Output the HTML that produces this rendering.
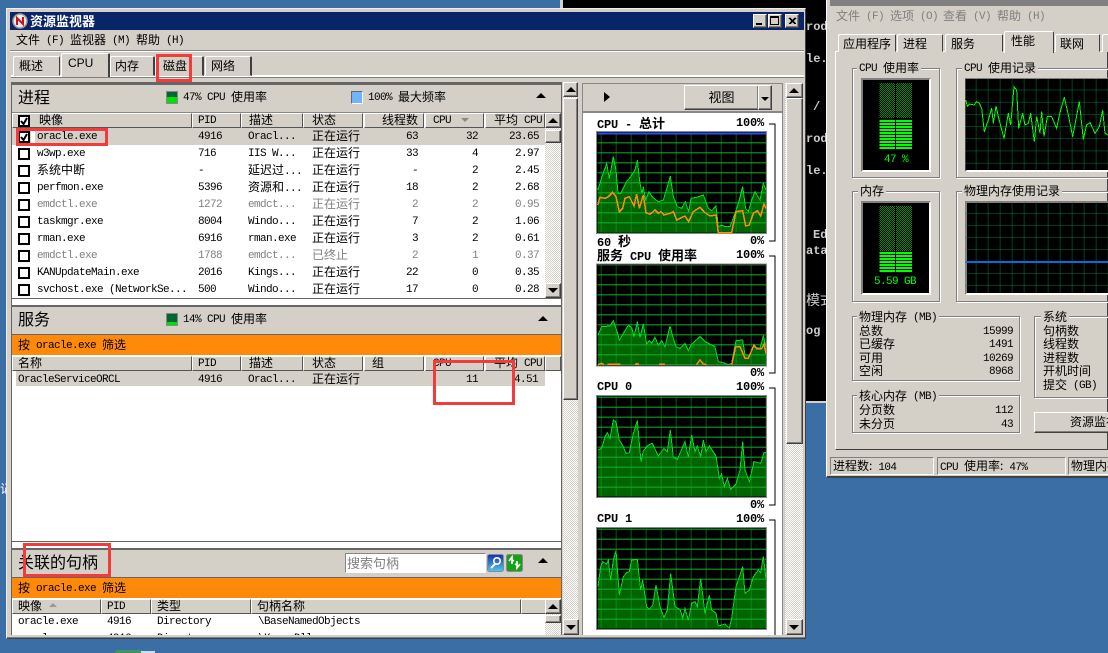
<!DOCTYPE html>
<html lang="zh"><head><meta charset="utf-8"><title>资源监视器</title>
<style>
*{box-sizing:border-box}
html,body{margin:0;padding:0}
body{width:1108px;height:653px;overflow:hidden;position:relative;background:#3a6ea5;font:11px/14px "Liberation Mono","WenQuanYi Zen Hei","Noto Sans CJK SC",monospace;letter-spacing:-.6px;color:#000}
div,span,svg{position:absolute}
svg{display:block;shape-rendering:crispEdges}
i{font-style:normal;font-size:12px;letter-spacing:0;position:relative;font-family:"WenQuanYi Zen Hei","Noto Sans CJK SC",sans-serif}
.t{white-space:nowrap;height:14px}
.u{margin-top:1px}
.x{margin-top:-1px}
.x i{top:1px}
.g{background:#d4d0c8}
.b{background:#d4d0c8;border:1px solid;border-color:#fff #404040 #404040 #fff;box-shadow:inset -1px -1px #808080}
.h{background:#d4d0c8;border:1px solid;border-color:#fff #555 #555 #fff;height:15px;top:0}
.d{background:repeating-conic-gradient(#d4d0c8 0 25%,#fff 0 50%) 0 0/2px 2px}
.or{background:#ff8a0a;left:12px;width:549px;height:21px;border-top:1px solid #666}
.sec{background:#d4d0c8;left:12px;width:549px;border-top:2px solid #666}
.lg{font-size:16px;letter-spacing:0;font-family:"WenQuanYi Zen Hei","Noto Sans CJK SC",sans-serif;line-height:20px;margin-top:-1px}
.r{left:12px;width:533px;height:17px;line-height:19px}
.r i{top:-2px}
.r span{white-space:nowrap;top:0}
.r span.m{top:-2px}
.r span.m i{top:0}
.n{left:25px}.p{left:186px}.q{left:236px}.s{left:300px}.th{right:127px}.c{right:67px}.av{right:6px}
.ck{left:6px;top:3px;width:12px;height:12px;border:2px solid #000;background:#fff}
.gy{color:#808080}
.up{width:0;height:0;border:5px solid transparent;border-top:0;border-bottom:5px solid #000}
.dn{width:0;height:0;border:5px solid transparent;border-bottom:0;border-top:5px solid #000}
.gb{border:1px solid #808080;box-shadow:1px 1px #fff,inset 1px 1px #fff}
.gt{background:#d4d0c8;padding:0 2px;white-space:nowrap;height:14px;line-height:14px}
.tb{background:#d4d0c8;border:1px solid;border-color:#fff #404040 transparent #fff;border-radius:2px 2px 0 0;text-align:left;line-height:18px;white-space:nowrap;letter-spacing:0}
.lb{font-weight:bold;font-size:12px;letter-spacing:-.2px;white-space:nowrap;height:14px;line-height:14px}
.lb i{font-size:13px;font-weight:bold}
.blk{background:#000;border:2px solid;border-color:#808080 #fff #fff #808080}
.st{border:1px solid;border-color:#808080 #fff #fff #808080;height:18px;top:457px;line-height:16px;padding-left:2px;white-space:nowrap;overflow:hidden}
.cs{color:#ccc;font-weight:bold;font-size:12px;letter-spacing:0;left:806px;width:20px;overflow:hidden;height:15px;line-height:15px;white-space:nowrap}
</style></head><body>

<!-- console -->
<div style="left:563px;top:0;width:264px;height:401px;background:#000"></div>
<div style="left:560px;top:0;width:3px;height:9px;background:#d4d0c8"></div>
<div style="left:806px;top:401px;width:20px;height:2px;background:#d4d0c8"></div>
<div class="cs" style="top:20px">rod</div>
<div class="cs" style="top:52px">le.</div>
<div class="cs" style="top:100px;left:813px">/</div>
<div class="cs" style="top:132px">rod</div>
<div class="cs" style="top:164px">le.</div>
<div class="cs" style="top:228px;left:813px;width:13px">Ed</div>
<div class="cs" style="top:244px">ata</div>
<div class="cs" style="top:291px;height:18px;line-height:18px;font-weight:normal"><i style="font-size:14px">模式</i></div>
<div class="cs" style="top:324px">og</div>
<div class="t" style="left:0;top:482px;width:6px;overflow:hidden;color:#fff"><i>记</i></div>
<div style="left:115px;top:650px;width:28px;height:3px;background:#3d9465;border-radius:8px 8px 0 0"></div>
<div style="left:141px;top:651px;width:14px;height:2px;background:#cde"></div>

<!-- task manager -->
<div class="g" style="left:826px;top:0;width:282px;height:478px;border-left:1px solid #fff;border-bottom:2px solid #404040"></div>
<div style="left:830px;top:0;width:278px;height:6px;background:#808080"></div>
<div class="t gy x" style="left:836px;top:9px;line-height:14px"><i>文件</i> (F)</div>
<div class="t gy x" style="left:890px;top:9px"><i>选项</i> (O)</div>
<div class="t gy x" style="left:943px;top:9px"><i>查看</i> (V)</div>
<div class="t gy x" style="left:997px;top:9px"><i>帮助</i> (H)</div>
<div class="g" style="left:835px;top:51px;width:273px;height:399px;border:1px solid;border-color:#fff #404040 #404040 #fff"></div>
<div class="tb" style="left:838px;top:34px;width:58px;height:18px;padding-left:4px"><i>应用程序</i></div>
<div class="tb" style="left:897px;top:34px;width:46px;height:18px;padding-left:5px"><i>进程</i></div>
<div class="tb" style="left:945px;top:34px;width:58px;height:18px;padding-left:5px"><i>服务</i></div>
<div class="tb" style="left:1004px;top:31px;width:50px;height:22px;border-bottom:0;z-index:2;padding-left:6px"><i>性能</i></div>
<div class="tb" style="left:1055px;top:34px;width:45px;height:18px;padding-left:4px"><i>联网</i></div>
<div class="tb" style="left:1102px;top:34px;width:10px;height:18px"></div>

<div class="gb" style="left:852px;top:68px;width:88px;height:110px"></div>
<div class="gt t x" style="left:857px;top:61px">CPU <i>使用率</i></div>
<div class="gb" style="left:956px;top:68px;width:160px;height:110px"></div>
<div class="gt t x" style="left:962px;top:61px">CPU <i>使用记录</i></div>
<div class="blk" style="left:861px;top:78px;width:70px;height:94px"></div>
<div class="blk" style="left:965px;top:78px;width:150px;height:94px"></div>

<div class="gb" style="left:852px;top:191px;width:88px;height:111px"></div>
<div class="gt t" style="left:858px;top:184px"><i>内存</i></div>
<div class="gb" style="left:956px;top:191px;width:160px;height:111px"></div>
<div class="gt t" style="left:962px;top:184px"><i>物理内存使用记录</i></div>
<div class="blk" style="left:861px;top:201px;width:70px;height:94px"></div>
<div class="blk" style="left:965px;top:201px;width:150px;height:94px"></div>

<!-- meter graphics + TM graphs -->
<svg style="left:820px;top:0" width="288" height="300" viewBox="0 0 864 900">
<defs>
<pattern id="dim" width="6" height="6" patternUnits="userSpaceOnUse"><rect width="6" height="6" fill="#000"/><rect width="3" height="3" fill="#0a8a0a"/><rect x="3" y="3" width="3" height="3" fill="#0a8a0a"/></pattern>
<pattern id="lit" width="9" height="9" patternUnits="userSpaceOnUse"><rect width="9" height="6" fill="#00ff00"/></pattern>
<pattern id="tg1" x="433" y="234" width="36" height="36.6" patternUnits="userSpaceOnUse"><path d="M35.5 0V36.6M0 36H36" stroke="#008040" stroke-width="3" fill="none"/></pattern>
<pattern id="tg2" x="433" y="66" width="36" height="36" patternUnits="userSpaceOnUse" ><path d="M35.5 0V36M0 35.5H36" stroke="#008040" stroke-width="3" fill="none"/></pattern>
</defs>
<rect x="178" y="249" width="47" height="105" fill="url(#dim)"/><rect x="228" y="249" width="48" height="105" fill="url(#dim)"/>
<rect x="178" y="357" width="47" height="93" fill="url(#lit)"/><rect x="228" y="357" width="48" height="93" fill="url(#lit)"/>
<rect x="436" y="237" width="428" height="273" fill="#000"/>
<rect x="436" y="237" width="428" height="273" fill="url(#tg1)"/>
<polyline fill="none" stroke="#00ff00" stroke-width="3" points="437,300 442,318 448,312 462,315 470,305 478,310 485,325 493,395 505,360 515,325 520,370 528,318 535,350 552,415 565,340 572,375 582,260 590,270 596,385 608,340 615,375 625,370 632,340 643,425 650,350 660,400 665,335 672,410 682,350 695,350 710,385 718,345 733,292 745,345 758,410 778,305 790,418 800,375 810,368 825,400 838,380 848,330 855,400 864,405"/>
</svg>
<div class="t" style="left:884px;top:153px;color:#00ff00">47 %</div>
<svg style="left:820px;top:180px" width="288" height="120" viewBox="0 0 864 360">
<rect x="178" y="78" width="47" height="135" fill="url(#dim)"/><rect x="228" y="78" width="48" height="135" fill="url(#dim)"/>
<rect x="178" y="216" width="47" height="60" fill="url(#lit)"/><rect x="228" y="216" width="48" height="60" fill="url(#lit)"/>
<rect x="436" y="66" width="428" height="273" fill="url(#tg2)"/>
<rect x="437" y="243" width="427" height="6" fill="#0070e0"/>
</svg>
<div class="t" style="left:874px;top:275px;color:#00ff00">5.59 GB</div>

<div class="gb" style="left:852px;top:316px;width:168px;height:65px"></div>
<div class="gt t x" style="left:857px;top:310px"><i>物理内存</i> (MB)</div>
<div class="t" style="left:859px;top:324px"><i>总数</i></div><div class="t u" style="right:95px;top:324px">15999</div>
<div class="t" style="left:859px;top:337px"><i>已缓存</i></div><div class="t u" style="right:95px;top:337px">1491</div>
<div class="t" style="left:859px;top:351px"><i>可用</i></div><div class="t u" style="right:95px;top:351px">10269</div>
<div class="t" style="left:859px;top:364px"><i>空闲</i></div><div class="t u" style="right:95px;top:364px">8968</div>
<div class="gb" style="left:852px;top:395px;width:168px;height:38px"></div>
<div class="gt t x" style="left:857px;top:389px"><i>核心内存</i> (MB)</div>
<div class="t" style="left:859px;top:403px"><i>分页数</i></div><div class="t u" style="right:95px;top:403px">112</div>
<div class="t" style="left:859px;top:417px"><i>未分页</i></div><div class="t u" style="right:95px;top:417px">43</div>
<div class="gb" style="left:1034px;top:316px;width:90px;height:82px"></div>
<div class="gt t" style="left:1041px;top:310px"><i>系统</i></div>
<div class="t" style="left:1043px;top:324px"><i>句柄数</i></div>
<div class="t" style="left:1043px;top:337px"><i>线程数</i></div>
<div class="t" style="left:1043px;top:351px"><i>进程数</i></div>
<div class="t" style="left:1043px;top:364px"><i>开机时间</i></div>
<div class="t x" style="left:1043px;top:378px"><i>提交</i> (GB)</div>
<div class="b" style="left:1034px;top:412px;width:90px;height:21px;padding:2px 0 0 35px;white-space:nowrap"><i>资源监视器</i></div>
<div class="st" style="left:830px;width:104px"><i>进程数:</i> 104</div>
<div class="st" style="left:937px;width:129px">CPU <i>使用率:</i> 47%</div>
<div class="st" style="left:1068px;width:60px"><i>物理内存:</i></div>

<!-- main window -->
<div class="g" style="left:6px;top:8px;width:800px;height:631px;border:1px solid;border-color:#eee #404040 #404040 #eee;box-shadow:inset 0 -1px #808080"></div>
<div style="left:10px;top:12px;width:794px;height:18px;background:#0a246a"></div>
<svg style="left:12px;top:13px;shape-rendering:auto" width="17" height="17" viewBox="0 0 17 17"><circle cx="8" cy="8" r="7" fill="#eee" stroke="#999" stroke-width="1.5"/><path d="M5 12V5L11 11V4" fill="none" stroke="#c11" stroke-width="2"/></svg>
<div class="t" style="left:30px;top:14px;color:#fff;font-weight:bold"><i style="font-size:13px;font-weight:bold">资源监视器</i></div>
<div class="b" style="left:753px;top:14px;width:14px;height:14px"></div><div style="left:756px;top:23px;width:6px;height:2px;background:#000"></div>
<div class="b" style="left:768px;top:14px;width:14px;height:14px"></div><div style="left:770px;top:16px;width:9px;height:9px;border:1px solid #000;border-top-width:2px"></div>
<div class="b" style="left:785px;top:14px;width:14px;height:14px"></div>
<svg style="left:785px;top:14px" width="14" height="14"><path d="M4 4L10 10M5 4L11 10M10 4L4 10M11 4L5 10" stroke="#000"/></svg>
<div class="t x" style="left:16px;top:33px"><i>文件</i> (F)</div>
<div class="t x" style="left:70px;top:33px"><i>监视器</i> (M)</div>
<div class="t x" style="left:136px;top:33px"><i>帮助</i> (H)</div>
<div style="left:10px;top:50px;width:794px;height:2px;background:#888;border-bottom:1px solid #fff"></div>
<div style="left:11px;top:75px;width:793px;height:2px;background:#fff"></div>
<div style="left:11px;top:77px;width:793px;height:1px;background:#808080"></div>
<div class="tb" style="left:13px;top:56px;width:47px;height:20px;padding-left:5px"><i>概述</i></div>
<div class="tb" style="left:61px;top:53px;width:49px;height:24px;border-right:2px solid #404040;border-bottom:0;z-index:2;padding-left:6px;font-family:'Liberation Sans',sans-serif;font-size:12px;line-height:19px">CPU</div>
<div class="tb" style="left:110px;top:56px;width:45px;height:20px;border-right:2px solid #404040;padding-left:4px"><i>内存</i></div>
<div class="tb" style="left:155px;top:56px;width:49px;height:20px;border-right:2px solid #404040;padding-left:7px"><i>磁盘</i></div>
<div class="tb" style="left:205px;top:56px;width:47px;height:20px;border-right:2px solid #404040;padding-left:5px"><i>网络</i></div>

<!-- left column -->
<div style="left:11px;top:82px;width:551px;height:553px;background:#fff;border:1px solid #666;border-width:1px 1px 0 1px"></div>

<!-- 进程 -->
<div class="sec" style="top:83px;height:30px;border-bottom:1px solid #888"></div>
<div class="t lg" style="left:18px;top:87px">进程</div>
<div style="left:166px;top:91px;width:12px;height:13px;border:1px solid #888;background:#063"><div style="left:0;top:5px;width:10px;height:6px;background:#00e000"></div></div>
<div class="t x" style="left:183px;top:90px">47% CPU <i>使用率</i></div>
<div style="left:351px;top:91px;width:12px;height:13px;background:#6fb4ff;border:1px solid;border-color:#667 #fff #fff #667"></div>
<div class="t x" style="left:368px;top:90px">100% <i>最大频率</i></div>
<div class="up" style="left:536px;top:93px"></div>

<div style="left:12px;top:113px;width:549px;height:15px">
 <div class="h" style="left:0;width:180px"></div>
 <div class="ck" style="left:6px;top:2px;background:#fff"></div>
 <div class="h" style="left:180px;width:49px"></div>
 <div class="h" style="left:229px;width:62px"></div>
 <div class="h" style="left:291px;width:60px"></div>
 <div class="h" style="left:352px;width:60px"></div>
 <div class="h" style="left:413px;width:59px"></div>
 <div class="h" style="left:473px;width:60px"></div>
</div>
<svg style="left:18px;top:115px;shape-rendering:auto" width="12" height="12"><path d="M3 6L5.5 9L9 3" fill="none" stroke="#000" stroke-width="2"/></svg>
<div class="t" style="left:39px;top:113px"><i>映像</i></div>
<div class="t u" style="left:198px;top:113px">PID</div>
<div class="t" style="left:249px;top:113px"><i>描述</i></div>
<div class="t" style="left:312px;top:113px"><i>状态</i></div>
<div class="t" style="right:690px;top:113px"><i>线程数</i></div>
<div class="t u" style="left:433px;top:113px">CPU</div>
<div style="left:461px;top:118px;width:0;height:0;border:4px solid transparent;border-bottom:0;border-top:4px solid #888"></div>
<div class="t x" style="left:494px;top:113px"><i>平均</i> CPU</div>

<div class="g" style="left:12px;top:128px;width:533px;height:17px"></div>
<div style="left:31px;top:128px;width:4px;height:17px;background:#fff"></div>
<div class="r" style="top:128px"><div class="ck"></div><span class="n">oracle.exe</span><span class="p">4916</span><span class="q">Oracl...</span><span class="s"><i>正在运行</i></span><span class="th">63</span><span class="c">32</span><span class="av">23.65</span></div>
<svg style="left:18px;top:131px;shape-rendering:auto" width="12" height="12"><path d="M3 6L5.5 9L9 3" fill="none" stroke="#000" stroke-width="2"/></svg>
<div class="r" style="top:145px"><div class="ck"></div><span class="n">w3wp.exe</span><span class="p">716</span><span class="q">IIS W...</span><span class="s"><i>正在运行</i></span><span class="th">33</span><span class="c">4</span><span class="av">2.97</span></div>
<div class="r" style="top:162px"><div class="ck"></div><span class="n"><i>系统中断</i></span><span class="p">-</span><span class="q m"><i>延迟过</i>...</span><span class="s"><i>正在运行</i></span><span class="th">-</span><span class="c">2</span><span class="av">2.45</span></div>
<div class="r" style="top:179px"><div class="ck"></div><span class="n">perfmon.exe</span><span class="p">5396</span><span class="q m"><i>资源和</i>...</span><span class="s"><i>正在运行</i></span><span class="th">18</span><span class="c">2</span><span class="av">2.68</span></div>
<div class="r gy" style="top:196px"><div class="ck"></div><span class="n">emdctl.exe</span><span class="p">1272</span><span class="q">emdct...</span><span class="s"><i>正在运行</i></span><span class="th">2</span><span class="c">2</span><span class="av">0.95</span></div>
<div class="r" style="top:213px"><div class="ck"></div><span class="n">taskmgr.exe</span><span class="p">8004</span><span class="q">Windo...</span><span class="s"><i>正在运行</i></span><span class="th">7</span><span class="c">2</span><span class="av">1.06</span></div>
<div class="r" style="top:230px"><div class="ck"></div><span class="n">rman.exe</span><span class="p">6916</span><span class="q">rman.exe</span><span class="s"><i>正在运行</i></span><span class="th">3</span><span class="c">2</span><span class="av">0.61</span></div>
<div class="r gy" style="top:247px"><div class="ck"></div><span class="n">emdctl.exe</span><span class="p">1788</span><span class="q">emdct...</span><span class="s"><i>已终止</i></span><span class="th">2</span><span class="c">1</span><span class="av">0.37</span></div>
<div class="r" style="top:264px"><div class="ck"></div><span class="n">KANUpdateMain.exe</span><span class="p">2016</span><span class="q">Kings...</span><span class="s"><i>正在运行</i></span><span class="th">22</span><span class="c">0</span><span class="av">0.35</span></div>
<div class="r" style="top:281px"><div class="ck"></div><span class="n">svchost.exe (NetworkSe...</span><span class="p">500</span><span class="q">Windo...</span><span class="s"><i>正在运行</i></span><span class="th">17</span><span class="c">0</span><span class="av">0.28</span></div>

<div class="d" style="left:545px;top:128px;width:16px;height:170px"></div>
<div class="b" style="left:545px;top:113px;width:16px;height:15px"></div><div class="up" style="left:548px;top:118px"></div>
<div class="b" style="left:545px;top:130px;width:16px;height:13px"></div>
<div class="b" style="left:545px;top:283px;width:16px;height:15px"></div><div class="dn" style="left:548px;top:288px"></div>
<div style="left:11px;top:298px;width:551px;height:1px;background:#666"></div>

<!-- 服务 -->
<div class="sec" style="top:305px;height:30px"></div>
<div class="t lg" style="left:18px;top:309px">服务</div>
<div style="left:166px;top:313px;width:12px;height:13px;border:1px solid #888;background:#063"><div style="left:0;top:8px;width:10px;height:3px;background:#00e000"></div></div>
<div class="t x" style="left:183px;top:312px">14% CPU <i>使用率</i></div>
<div class="up" style="left:538px;top:316px"></div>
<div class="or" style="top:334px"></div>
<div class="t x" style="left:18px;top:338px"><i>按</i> oracle.exe <i>筛选</i></div>
<div style="left:12px;top:356px;width:549px;height:15px">
 <div class="h" style="left:0;width:180px"></div>
 <div class="h" style="left:180px;width:49px"></div>
 <div class="h" style="left:229px;width:62px"></div>
 <div class="h" style="left:291px;width:60px"></div>
 <div class="h" style="left:352px;width:60px"></div>
 <div class="h" style="left:413px;width:59px"></div>
 <div class="h" style="left:473px;width:60px"></div>
 <div class="h" style="left:533px;width:16px"></div>
</div>
<div class="t" style="left:18px;top:356px"><i>名称</i></div>
<div class="t u" style="left:198px;top:356px">PID</div>
<div class="t" style="left:249px;top:356px"><i>描述</i></div>
<div class="t" style="left:312px;top:356px"><i>状态</i></div>
<div class="t" style="left:372px;top:356px"><i>组</i></div>
<div class="t u" style="left:433px;top:356px">CPU</div>
<div class="t x" style="left:494px;top:356px"><i>平均</i> CPU</div>
<div class="g" style="left:16px;top:371px;width:529px;height:15px"></div>
<div class="t u" style="left:18px;top:372px">OracleServiceORCL</div>
<div class="t u" style="left:198px;top:372px">4916</div>
<div class="t u" style="left:248px;top:372px">Oracl...</div>
<div class="t" style="left:312px;top:372px"><i>正在运行</i></div>
<div class="t u" style="left:466px;top:372px">11</div>
<div class="t u" style="left:514px;top:372px">4.51</div>
<div style="left:11px;top:541px;width:551px;height:1px;background:#666"></div>

<!-- 句柄 -->
<div class="sec" style="top:548px;height:29px"></div>
<div class="t lg" style="left:18px;top:552px">关联的句柄</div>
<div style="left:345px;top:553px;width:141px;height:20px;background:#fff;border:1px solid;border-color:#888 #fff #fff #888;color:#808080;font:13px/18px 'WenQuanYi Zen Hei','Noto Sans CJK SC',sans-serif;letter-spacing:0;padding-left:1px">搜索句柄</div>
<svg style="left:487px;top:554px;shape-rendering:auto" width="17" height="18"><defs><linearGradient id="bl" x1="0" y1="0" x2="0" y2="1"><stop offset="0" stop-color="#1530b0"/><stop offset="1" stop-color="#50c8f0"/></linearGradient></defs><rect x=".5" y=".5" width="16" height="17" rx="2" fill="url(#bl)" stroke="#889"/><circle cx="10" cy="7" r="3.2" fill="none" stroke="#fff" stroke-width="1.6"/><path d="M8 10L4 14" stroke="#fff" stroke-width="2"/></svg>
<svg style="left:506px;top:554px;shape-rendering:auto" width="17" height="18"><rect x=".5" y=".5" width="16" height="17" rx="2" fill="#18a018" stroke="#889"/><path d="M3 7L6 3L6 6L8 7M14 10L11 14L11 11L9 10M6 6V10M11 7V11" fill="none" stroke="#fff" stroke-width="1.6"/></svg>
<div class="up" style="left:538px;top:558px"></div>
<div class="or" style="top:577px"></div>
<div class="t x" style="left:18px;top:581px"><i>按</i> oracle.exe <i>筛选</i></div>
<div style="left:12px;top:599px;width:549px;height:15px">
 <div class="h" style="left:0;width:89px"></div>
 <div class="h" style="left:89px;width:50px"></div>
 <div class="h" style="left:139px;width:100px"></div>
 <div class="h" style="left:239px;width:270px"></div>
 <div class="h" style="left:509px;width:40px"></div>
</div>
<div class="t" style="left:18px;top:599px"><i>映像</i></div>
<div style="left:49px;top:603px;width:0;height:0;border:4px solid transparent;border-top:0;border-bottom:4px solid #999"></div>
<div class="t u" style="left:107px;top:599px">PID</div>
<div class="t" style="left:157px;top:599px"><i>类型</i></div>
<div class="t" style="left:257px;top:599px"><i>句柄名称</i></div>
<div class="t u" style="left:18px;top:614px">oracle.exe</div>
<div class="t u" style="left:107px;top:614px">4916</div>
<div class="t u" style="left:157px;top:614px">Directory</div>
<div class="t u" style="left:258px;top:614px">\BaseNamedObjects</div>
<div style="left:12px;top:632px;width:533px;height:3px;overflow:hidden">
 <div class="t" style="left:6px;top:0">oracle.exe</div>
 <div class="t" style="left:95px;top:0">4916</div>
 <div class="t" style="left:145px;top:0">Directory</div>
 <div class="t" style="left:246px;top:0">\KnownDlls</div>
</div>
<div class="d" style="left:545px;top:614px;width:16px;height:21px"></div>
<div class="b" style="left:545px;top:599px;width:16px;height:15px"></div><div class="up" style="left:548px;top:604px"></div>
<div class="b" style="left:545px;top:615px;width:16px;height:8px"></div>

<!-- outer left scrollbar -->
<div class="d" style="left:563px;top:82px;width:15px;height:553px"></div>
<div class="b" style="left:563px;top:82px;width:15px;height:15px"></div><div class="up" style="left:566px;top:87px"></div>
<div class="b" style="left:563px;top:98px;width:15px;height:302px"></div>
<div class="b" style="left:563px;top:619px;width:16px;height:16px"></div><div class="dn" style="left:566px;top:625px"></div>

<!-- right panel -->
<div style="left:582px;top:83px;width:201px;height:552px;background:#fff;border:1px solid #888;border-bottom:0"></div>
<div class="g" style="left:583px;top:84px;width:199px;height:29px;border-bottom:2px solid #888"></div>
<div style="left:604px;top:92px;width:0;height:0;border:5px solid transparent;border-left:6px solid #000;border-right:0"></div>
<div class="b" style="left:684px;top:85px;width:75px;height:25px;text-align:center;line-height:22px"><i style="font-size:13px">视图</i></div>
<div class="b" style="left:758px;top:85px;width:14px;height:25px"></div>
<div style="left:761px;top:97px;width:0;height:0;border:4px solid transparent;border-bottom:0;border-top:4px solid #000"></div>

<div class="lb t" style="left:597px;top:116px">CPU - <i>总计</i></div>
<div class="lb t" style="right:344px;top:116px">100%</div>
<div class="lb t" style="left:597px;top:234px">60 <i>秒</i></div>
<div class="lb t" style="right:344px;top:234px">0%</div>
<div class="lb t" style="left:597px;top:248px"><i>服务</i> CPU <i>使用率</i></div>
<div class="lb t" style="right:344px;top:248px">100%</div>
<div class="lb t" style="right:344px;top:366px">0%</div>
<div class="lb t" style="left:597px;top:380px">CPU 0</div>
<div class="lb t" style="right:344px;top:380px">100%</div>
<div class="lb t" style="right:344px;top:498px">0%</div>
<div class="lb t" style="left:597px;top:512px">CPU 1</div>
<div class="lb t" style="right:344px;top:512px">100%</div>

<svg style="left:590px;top:120px" width="190" height="520"><path d="M179 4H185V121H179M179 136H185V253H179M179 268H185V385H179M179 400H185V515" fill="none" stroke="#000"/></svg>

<!-- Chart 1 -->
<svg style="left:580px;top:80px" width="240" height="180" viewBox="0 0 720 540">
<defs><pattern id="c1" x="19" y="160" width="45" height="30" patternUnits="userSpaceOnUse"><path d="M44.5 0V30M0 29H45" stroke="#0db32a" stroke-width="3" fill="none"/></pattern></defs>
<rect x="50" y="155" width="510" height="306" fill="#000" stroke="#888" stroke-width="3"/>
<polygon fill="#006400" points="53,458 53,330 60,310 66,290 80,250 88,295 100,230 108,270 114,340 122,340 132,320 140,305 152,290 165,270 172,240 180,310 186,340 190,320 197,360 207,335 216,350 235,365 250,360 265,310 271,288 280,350 292,380 305,385 316,365 326,395 333,355 350,352 370,345 385,385 395,392 408,378 415,440 425,435 435,440 450,440 465,400 478,360 488,320 497,385 505,395 515,360 525,335 540,360 550,310 558,330 558,458"/>
<rect x="53" y="160" width="505" height="298" fill="url(#c1)"/>
<rect x="53" y="158" width="505" height="6" fill="#2850f0"/>
<polyline fill="none" stroke="#00e020" stroke-width="3" points="53,330 60,310 66,290 80,250 88,295 100,230 108,270 114,340 122,340 132,320 140,305 152,290 165,270 172,240 180,310 186,340 190,320 197,360 207,335 216,350 235,365 250,360 265,310 271,288 280,350 292,380 305,385 316,365 326,395 333,355 350,352 370,345 385,385 395,392 408,378 415,440 425,435 435,440 450,440 465,400 478,360 488,320 497,385 505,395 515,360 525,335 540,360 550,310 558,330"/>
<polyline fill="none" stroke="#ff8c10" stroke-width="4.5" points="53,375 60,352 75,355 85,350 98,337 108,350 118,395 128,385 135,355 148,350 162,378 170,342 178,385 190,345 198,398 210,403 225,390 235,400 243,395 252,405 270,400 280,395 290,420 315,408 326,425 340,395 360,382 375,398 390,408 408,405 415,458 455,458 468,395 488,392 497,438 508,435 520,400 532,392 542,408 552,372 558,385"/>
</svg>

<!-- Chart 2 -->
<svg style="left:590px;top:250px" width="220" height="140" viewBox="0 0 660 420">
<defs><pattern id="c2" x="-11" y="46" width="45" height="30" patternUnits="userSpaceOnUse"><path d="M44.5 0V30M0 29H45" stroke="#0db32a" stroke-width="3" fill="none"/></pattern></defs>
<rect x="20" y="42" width="510" height="306" fill="#000" stroke="#888" stroke-width="3"/>
<polygon fill="#006400" points="24,345 24,255 35,230 60,228 70,212 80,240 88,270 100,250 115,226 125,232 132,260 142,215 150,262 160,222 170,282 178,272 185,280 195,262 205,285 215,272 225,290 240,228 250,265 258,290 270,295 285,280 295,302 305,282 330,260 345,275 375,290 385,335 400,338 415,344 425,340 438,272 458,270 465,315 478,315 490,290 510,295 520,258 528,290 528,345"/>
<rect x="23" y="45" width="505" height="300" fill="url(#c2)"/>
<polyline fill="none" stroke="#00e020" stroke-width="3" points="24,255 35,230 60,228 70,212 80,240 88,270 100,250 115,226 125,232 132,260 142,215 150,262 160,222 170,282 178,272 185,280 195,262 205,285 215,272 225,290 240,228 250,265 258,290 270,295 285,280 295,302 305,282 330,260 345,275 375,290 385,335 400,338 415,344 425,340 438,272 458,270 465,315 478,315 490,290 510,295 520,258 528,290"/>
<path fill="none" stroke="#ff8c10" stroke-width="4.5" d="M24 344L35 340L42 344M52 343H92M135 344L141 341L147 344M207 343H225M320 344L330 330L340 342L350 344M425 344L437 290H450L465 325H475L492 285L500 296H515L522 282L528 310"/>
</svg>

<!-- Chart 3 + 4 -->
<svg style="left:590px;top:380px" width="220" height="255" viewBox="0 0 660 765">
<defs>
<pattern id="c3" x="-11" y="53" width="45" height="30" patternUnits="userSpaceOnUse"><path d="M44.5 0V30M0 29H45" stroke="#0db32a" stroke-width="3" fill="none"/></pattern>
<pattern id="c4" x="-11" y="449" width="45" height="30" patternUnits="userSpaceOnUse"><path d="M44.5 0V30M0 29H45" stroke="#0db32a" stroke-width="3" fill="none"/></pattern>
</defs>
<rect x="20" y="46" width="510" height="306" fill="#000" stroke="#888" stroke-width="3"/>
<polygon fill="#006400" points="24,350 24,210 35,205 45,170 52,158 60,175 70,120 78,125 88,180 100,200 108,220 118,218 130,160 142,122 148,190 153,245 160,212 175,195 187,190 205,228 222,205 232,215 241,150 250,232 262,238 285,185 295,230 305,165 315,215 322,198 332,230 340,180 348,215 358,198 378,228 388,295 395,282 403,320 412,295 422,328 438,312 450,270 458,185 465,270 478,305 492,245 512,250 522,218 528,218 528,350"/>
<rect x="23" y="49" width="505" height="301" fill="url(#c3)"/>
<polyline fill="none" stroke="#00e020" stroke-width="3" points="24,210 35,205 45,170 52,158 60,175 70,120 78,125 88,180 100,200 108,220 118,218 130,160 142,122 148,190 153,245 160,212 175,195 187,190 205,228 222,205 232,215 241,150 250,232 262,238 285,185 295,230 305,165 315,215 322,198 332,230 340,180 348,215 358,198 378,228 388,295 395,282 403,320 412,295 422,328 438,312 450,270 458,185 465,270 478,305 492,245 512,250 522,218 528,218"/>
<rect x="20" y="442" width="510" height="306" fill="#000" stroke="#888" stroke-width="3"/>
<polygon fill="#006400" points="24,746 24,620 32,560 38,545 50,552 55,540 62,600 70,540 78,512 88,645 100,590 110,578 118,575 125,540 142,538 152,630 158,600 170,680 178,688 188,675 198,615 210,680 222,712 232,690 242,580 255,680 270,688 278,715 285,685 295,720 305,670 315,665 322,680 332,595 345,700 358,645 365,690 378,700 385,738 405,732 418,744 425,715 438,620 458,560 465,640 478,630 490,590 505,570 512,578 520,530 528,595 528,746"/>
<rect x="23" y="445" width="505" height="301" fill="url(#c4)"/>
<polyline fill="none" stroke="#00e020" stroke-width="3" points="24,620 32,560 38,545 50,552 55,540 62,600 70,540 78,512 88,645 100,590 110,578 118,575 125,540 142,538 152,630 158,600 170,680 178,688 188,675 198,615 210,680 222,712 232,690 242,580 255,680 270,688 278,715 285,685 295,720 305,670 315,665 322,680 332,595 345,700 358,645 365,690 378,700 385,738 405,732 418,744 425,715 438,620 458,560 465,640 478,630 490,590 505,570 512,578 520,530 528,595"/>
</svg>

<!-- right scrollbar -->
<div class="d" style="left:785px;top:83px;width:18px;height:552px"></div>
<div class="b" style="left:786px;top:83px;width:17px;height:15px"></div><div class="up" style="left:789px;top:88px"></div>
<div class="b" style="left:786px;top:98px;width:17px;height:346px"></div>
<div class="b" style="left:786px;top:619px;width:17px;height:16px"></div><div class="dn" style="left:789px;top:625px"></div>
<div style="left:7px;top:635px;width:798px;height:3px;background:#d4d0c8;border-bottom:1px solid #808080"></div>

<!-- red annotations -->
<div style="left:156px;top:54px;width:36px;height:28px;border:3px solid #f33b3b"></div>
<div style="left:16px;top:128px;width:92px;height:18px;border:3px solid #f33b3b"></div>
<div style="left:433px;top:360px;width:82px;height:45px;border:3px solid #f33b3b"></div>
<div style="left:23px;top:543px;width:88px;height:34px;border:3px solid #f33b3b"></div>
</body></html>
